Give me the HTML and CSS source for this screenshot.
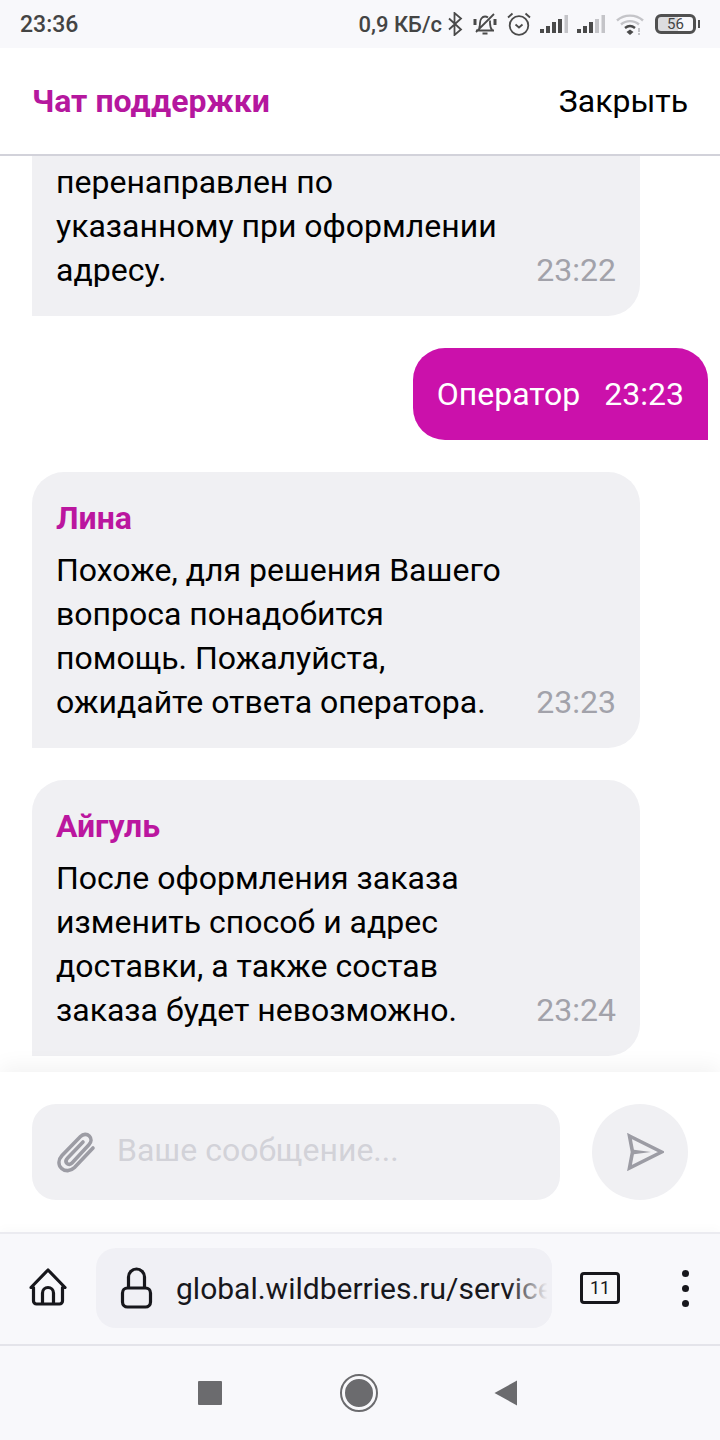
FILE: index.html
```html
<!DOCTYPE html>
<html lang="ru">
<head>
    <meta charset="UTF-8">
    <meta name="viewport" content="width=device-width, initial-scale=1.0">
    <title>Чат поддержки</title>
    <link rel="stylesheet" href="styles.css">
</head>
<body>
    <!-- Status bar -->
    <div class="status-bar">
        <span class="status-time">23:36</span>
        <div class="status-icons">
            <span class="net-speed">0,9 КБ/с</span>
            <svg class="ic-bt" width="16" height="24" viewBox="0 0 16 24" fill="none" stroke="#4a4a4a" stroke-width="1.800"><path d="M2 6.500l12 11L7.500 23V1L14 6.500 2 17.500"/></svg>
            <svg class="ic-bell" width="26" height="24" viewBox="0 0 26 24" fill="none" stroke="#4a4a4a" stroke-width="1.800"><path d="M4 18.500h18M7 16c.8-1.500 1-3 1-5 0-3.500 2-6.500 5-6.500 1.200 0 2.200.4 3 1M18 8.500V11c0 3 .6 5.500 2.500 7.500M10.500 21.500h5M22 2L4 20"/><path d="M3 7v6M23 7v6" stroke-width="3"/></svg>
            <svg class="ic-alarm" width="24" height="24" viewBox="0 0 24 24" fill="none" stroke="#4a4a4a" stroke-width="1.800"><circle cx="12" cy="13.500" r="9.300"/><path d="M8.500 12.500l3.500 3 3.500-3M1 5.500L5.500 1.500M23 5.500L18.500 1.500"/></svg>
            <svg class="ic-signal" width="28" height="20" viewBox="0 0 28 20"><path fill="#4a4a4a" d="M0 15h4v4H0zM6 12h4v7H6zM12 8h4v11h-4zM18 5h4v14h-4z"/><path fill="#c4c4c8" d="M24.500 1H28v18h-3.500z"/></svg>
            <svg class="ic-signal" width="28" height="20" viewBox="0 0 28 20"><path fill="#4a4a4a" d="M0 15h4v4H0zM6 12h4v7H6zM12 8h4v11h-4z"/><path fill="#c4c4c8" d="M18 5h4v14h-4zM24.500 1H28v18h-3.500z"/></svg>
            <svg class="ic-wifi" width="28" height="22" viewBox="0 0 28 22" fill="none" stroke-width="2.400"><path stroke="#c4c4c8" d="M1 7.500c7-6.500 19-6.500 26 0M5 11.500c5-4.500 13-4.500 18 0"/><path stroke="#4a4a4a" d="M9 15c3-2.400 7-2.400 10 0"/><path fill="#4a4a4a" stroke="none" d="M14 16.500l3.500 2.500-3.500 3-3.500-3z"/><path stroke="#c4c4c8" stroke-width="2" d="M23 15v4M23 20v2"/></svg>
            <div class="battery"><span class="battery-body">56</span><span class="battery-nub"></span></div>
        </div>
    </div>

    <!-- Header -->
    <header class="chat-header">
        <h1 class="chat-title">Чат поддержки</h1>
        <span class="chat-close">Закрыть</span>
    </header>

    <!-- Messages -->
    <main class="messages">
        <div class="msg msg-in msg-clipped">
            <p class="msg-text">перенаправлен по<br>указанному при оформлении<br>адресу.</p>
            <span class="msg-time">23:22</span>
        </div>
        <div class="msg msg-out">
            <p class="msg-text">Оператор</p>
            <span class="msg-time">23:23</span>
        </div>
        <div class="msg msg-in">
            <div class="msg-name">Лина</div>
            <p class="msg-text">Похоже, для решения Вашего<br>вопроса понадобится<br>помощь. Пожалуйста,<br>ожидайте ответа оператора.</p>
            <span class="msg-time">23:23</span>
        </div>
        <div class="msg msg-in">
            <div class="msg-name">Айгуль</div>
            <p class="msg-text">После оформления заказа<br>изменить способ и адрес<br>доставки, а также состав<br>заказа будет невозможно.</p>
            <span class="msg-time">23:24</span>
        </div>
    </main>

    <!-- Message input -->
    <div class="composer">
        <div class="composer-input">
            <svg width="44" height="44" viewBox="0 0 44 44" fill="none" stroke="#9c9ca4" stroke-width="3.600" stroke-linecap="round"><path d="M39 18L20.500 37.500c-4 4-9.500 4-13 .8-3.500-3.400-3.300-8.600.5-12.800L26.500 6.500c2.800-2.800 6.500-2.800 8.800-.5 2.400 2.400 2.300 6-.4 8.800L18 33c-1.600 1.700-3.700 1.800-5 .5-1.400-1.400-1.200-3.500.4-5.200L29 12"/></svg>
            <span class="composer-placeholder">Ваше сообщение...</span>
        </div>
        <div class="send-button">
            <svg width="38" height="38" viewBox="0 0 38 38" fill="none" stroke="#9c9ca4" stroke-width="3.600"><path d="M3.500 3l32 16-32 16 3-16z"/><path fill="#9c9ca4" stroke="none" d="M6 16.500L25 19 6 21.500z"/></svg>
        </div>
    </div>

    <!-- Browser toolbar -->
    <div class="browser-bar">
        <svg class="ic-home" width="38" height="40" viewBox="0 0 38 40" fill="none" stroke="#17171c" stroke-width="3.200" stroke-linejoin="round"><path d="M2 19.500L19 2l17 17.500h-2.500V33a3 3 0 0 1-3 3h-23a3 3 0 0 1-3-3V19.500z"/><path d="M13.500 36V25a5.500 5.500 0 0 1 11 0v11"/></svg>
        <div class="url-pill">
            <svg width="34" height="42" viewBox="0 0 34 42" fill="none" stroke="#17171c" stroke-width="3.200"><rect x="2.500" y="21" width="28" height="19" rx="5"/><path d="M8.500 21V10a8 8 0 0 1 16 0v11"/></svg>
            <span class="url-text">global.wildberries.ru/service</span>
        </div>
        <div class="tab-count">11</div>
        <div class="menu-dots"><i></i><i></i><i></i></div>
    </div>

    <!-- Android navigation -->
    <nav class="nav-bar">
        <span class="nav-square"></span>
        <span class="nav-circle"></span>
        <svg width="24" height="26" viewBox="0 0 24 26"><path fill="#6b6b6e" d="M23 .5v25L.5 13z"/></svg>
    </nav>
</body>
</html>
```

FILE: styles.css
```css
/* Global Styles */
* {
    box-sizing: border-box;
}

body {
    width: 720px;
    height: 1440px;
    margin: 0;
    overflow: hidden;
    display: flex;
    flex-direction: column;
    font-family: Roboto, sans-serif;
    color: #000;
    background: #fff;
}

svg {
    flex: none;
}

/* Status bar */
.status-bar {
    height: 48px;
    flex: none;
    padding: 0 20px;
    display: flex;
    justify-content: space-between;
    align-items: center;
    background: #f8f8fb;
    color: #444;
    font-size: 22px;
    font-weight: 500;
}

.status-time {
    font-size: 23px;
}

.status-icons {
    display: flex;
    align-items: center;
}

.net-speed {
    margin-right: 5px;
}

.ic-bell,
.ic-alarm,
.ic-signal {
    margin-left: 9px;
}

.ic-wifi {
    margin-left: 11px;
}

.battery {
    display: flex;
    align-items: center;
    gap: 2px;
    margin-left: 11px;
}

.battery-body {
    width: 41px;
    height: 20px;
    border: 3px solid #505050;
    border-radius: 6px;
    font-size: 15px;
    font-weight: 400;
    line-height: 14px;
    text-align: center;
    background: linear-gradient(90deg, #dcdcdf 56%, transparent 56%);
}

.battery-nub {
    width: 2px;
    height: 8px;
    background: #505050;
}

/* Header */
.chat-header {
    height: 108px;
    flex: none;
    padding: 0 32px;
    display: flex;
    justify-content: space-between;
    align-items: center;
    background: #fff;
    border-bottom: 2px solid #d2d2da;
}

.chat-title {
    margin: 0;
    font-size: 32px;
    font-weight: 700;
    color: #b5179e;
}

.chat-close {
    font-size: 32px;
}

/* Messages */
.messages {
    flex: 1;
    min-height: 0;
    overflow: hidden;
    padding: 0 12px 16px 32px;
    display: flex;
    flex-direction: column;
    justify-content: flex-end;
    gap: 32px;
}

.msg {
    position: relative;
    flex: none;
    padding: 24px;
    font-size: 32px;
    line-height: 44px;
}

.msg-in {
    width: 608px;
    background: #f0f0f3;
    border-radius: 32px 32px 32px 0;
}

/* top of this one is scrolled away under the header */
.msg-clipped {
    padding-top: 68px;
}

.msg-out {
    align-self: flex-end;
    display: flex;
    gap: 24px;
    color: #fff;
    background: #cb11ab;
    border-radius: 32px 32px 0 32px;
}

.msg-name {
    margin-bottom: 8px;
    font-size: 32px;
    font-weight: 700;
    color: #bb169f;
}

.msg-text {
    margin: 0;
}

.msg-time {
    color: #fff;
}

.msg-in .msg-time {
    position: absolute;
    right: 24px;
    bottom: 24px;
    color: #a2a2aa;
}

/* Message input */
.composer {
    height: 160px;
    flex: none;
    padding: 32px;
    display: flex;
    gap: 32px;
    background: #fff;
    box-shadow: 0 -6px 20px rgba(0, 0, 0, 0.05);
    position: relative;
}

.composer-input {
    flex: 1;
    padding: 0 20px 0 22px;
    display: flex;
    align-items: center;
    gap: 19px;
    background: #f0f0f3;
    border-radius: 24px;
}

.composer-placeholder {
    padding-bottom: 4px;
    font-size: 32px;
    color: #d2d2d8;
}

.send-button {
    width: 96px;
    height: 96px;
    flex: none;
    padding-left: 10px;
    display: flex;
    justify-content: center;
    align-items: center;
    background: #f0f0f3;
    border-radius: 50%;
}

/* Browser toolbar */
.browser-bar {
    height: 114px;
    flex: none;
    padding: 0 31px 2px 29px;
    display: flex;
    align-items: center;
    background: #f8f8fb;
    border-top: 2px solid #ebebf0;
    border-bottom: 2px solid #e4e4ea;
    box-shadow: 0 -4px 10px rgba(0, 0, 0, 0.02);
    position: relative;
}

.url-pill {
    width: 456px;
    height: 80px;
    margin-left: 29px;
    padding-left: 24px;
    display: flex;
    align-items: center;
    gap: 22px;
    background: #f0f0f5;
    border-radius: 20px;
    overflow: hidden;
    position: relative;
}

.url-pill::after {
    content: "";
    position: absolute;
    top: 0;
    right: 0;
    bottom: 0;
    width: 44px;
    background: linear-gradient(90deg, rgba(240, 240, 245, 0), #f0f0f5 90%);
}

.url-text {
    font-size: 30px;
    white-space: nowrap;
    color: #17171c;
}

.tab-count {
    width: 40px;
    height: 32px;
    margin-left: 28px;
    border: 3px solid #17171c;
    border-radius: 4px;
    font-size: 18px;
    line-height: 26px;
    text-align: center;
    color: #17171c;
}

.menu-dots {
    margin-left: auto;
    display: flex;
    flex-direction: column;
    gap: 8px;
}

.menu-dots i {
    display: block;
    width: 7px;
    height: 7px;
    border-radius: 50%;
    background: #17171c;
}

/* Android navigation */
.nav-bar {
    height: 94px;
    flex: none;
    padding-left: 198px;
    display: flex;
    align-items: center;
    background: #f8f8fb;
}

.nav-square {
    width: 24px;
    height: 24px;
    border-radius: 1px;
    background: #6b6b6e;
}

.nav-circle {
    width: 34px;
    height: 34px;
    margin-left: 120px;
    margin-right: 118px;
    border-radius: 50%;
    background: #6b6b6e;
    border: 3px solid #f8f8fb;
    outline: 2px solid #6b6b6e;
}
```
